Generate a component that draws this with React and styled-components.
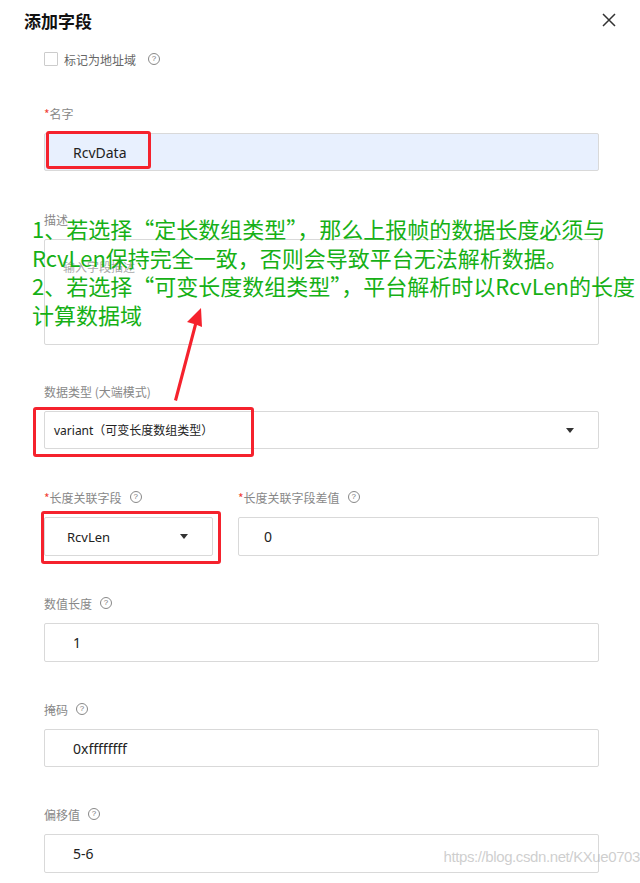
import React from "react"
import styled, { createGlobalStyle } from "styled-components"

const Global = createGlobalStyle`
  body {
    margin: 0;
    background: #fff;
    font-family: "Noto Sans", "Noto Sans CJK SC", sans-serif;
  }
`

const Page = styled.div`
  position: relative;
  width: 640px;
  height: 883px;
  overflow: hidden;
  background: #fff;
`

const Header = styled.div`
  display: flex;
  align-items: center;
  justify-content: space-between;
  height: 40px;
  padding: 0 23px 0 24px;
`

const Title = styled.h1`
  margin: 0;
  font-family: "Noto Sans CJK SC", sans-serif;
  font-size: 17px;
  font-weight: 700;
  color: #111;
`

const Form = styled.div`
  display: flex;
  flex-direction: column;
  padding: 12px 41px 0 44px;
`

const CheckRow = styled.div`
  display: flex;
  align-items: center;
  height: 14px;
  gap: 6px;
  margin-bottom: 39px;
  font-family: "Noto Sans CJK SC", sans-serif;
  font-size: 12px;
  color: #666;
`

const Check = styled.span`
  width: 14px;
  height: 14px;
  box-sizing: border-box;
  border: 1px solid #ccc;
  border-radius: 1px;
`

const Help = styled.span`
  display: inline-flex;
  align-items: center;
  justify-content: center;
  width: 12px;
  height: 12px;
  box-sizing: border-box;
  margin-left: ${(p) => p.$gap || 8}px;
  border: 1px solid #888;
  border-radius: 50%;
  font-family: "Liberation Sans", sans-serif;
  font-size: 8px;
  line-height: 1;
  color: #777;
`

const Field = styled.div`
  display: flex;
  flex-direction: column;
  flex: ${(p) => (p.$flex ? p.$flex : "none")};
  width: ${(p) => (p.$width ? p.$width + "px" : "auto")};
  margin-bottom: ${(p) => (p.$mb !== undefined ? p.$mb : 39)}px;
`

const Row = styled.div`
  display: flex;
  gap: 25px;
  margin-bottom: 39px;
`

const Label = styled.div`
  display: flex;
  align-items: center;
  height: 16px;
  margin-bottom: 12px;
  font-family: "Noto Sans CJK SC", sans-serif;
  font-size: 12px;
  color: #888;

  b {
    color: #f04134;
    font-weight: 400;
  }
`

const Box = styled.div`
  position: relative;
  display: flex;
  align-items: ${(p) => (p.$area ? "flex-start" : "center")};
  box-sizing: border-box;
  height: ${(p) => p.$h || 38}px;
  padding: ${(p) => (p.$area ? "18px" : "0")} 24px 0 ${(p) => p.$pl || 28}px;
  background: ${(p) => (p.$fill ? "#e8f0fe" : "#fff")};
  border: 1px solid #d9d9d9;
  border-radius: 2px;
  font-family: "Noto Sans", "Noto Sans CJK SC", sans-serif;
  font-size: ${(p) => p.$fs || 14}px;
  color: ${(p) => (p.$placeholder ? "#aaa" : "#222")};
`

const Value = styled.span`
  flex: 1;
  white-space: nowrap;
`

const Caret = styled.span`
  width: 0;
  height: 0;
  border-left: 4.5px solid transparent;
  border-right: 4.5px solid transparent;
  border-top: 5px solid #333;
`

const RedBox = styled.div`
  position: absolute;
  left: ${(p) => p.$l}px;
  top: ${(p) => p.$t}px;
  width: ${(p) => p.$w}px;
  height: ${(p) => p.$h}px;
  box-sizing: border-box;
  border: 3px solid #f5222d;
  border-radius: 3px;
`

const Note = styled.div`
  position: absolute;
  left: 32px;
  top: 214px;
  width: 610px;
  font-family: "Noto Sans CJK SC", sans-serif;
  font-size: 22px;
  line-height: 28.5px;
  color: #16b016;
  white-space: nowrap;
`

const Arrow = styled.svg`
  position: absolute;
  left: 160px;
  top: 300px;
`

const Watermark = styled.div`
  position: absolute;
  right: 0;
  top: 848px;
  font-family: "Liberation Sans", sans-serif;
  font-size: 15px;
  letter-spacing: -0.4px;
  color: rgba(190, 190, 190, 0.75);
`

const Close = () => (
  <svg width="16" height="16" viewBox="0 0 16 16">
    <path d="M2 2 L14 14 M14 2 L2 14" stroke="#333" strokeWidth="1.5" />
  </svg>
)

const App = () => (
  <Page>
    <Global />
    <Header>
      <Title>添加字段</Title>
      <Close />
    </Header>
    <Form>
      <CheckRow>
        <Check />
        标记为地址域
        <Help $gap={6}>?</Help>
      </CheckRow>

      <Field $mb={40}>
        <Label>
          <b>*</b>名字
        </Label>
        <Box $fill>
          <Value>RcvData</Value>
          <RedBox $l={1} $t={-3} $w={105} $h={38} />
        </Box>
      </Field>

      <Field $mb={38}>
        <Label>描述</Label>
        <Box $area $h={106} $pl={18} $fs={12} $placeholder>
          <Value>输入字段描述</Value>
        </Box>
      </Field>

      <Field $mb={40}>
        <Label>数据类型 (大端模式)</Label>
        <Box $pl={9} $fs={12}>
          <Value>variant（可变长度数组类型）</Value>
          <Caret />
          <RedBox $l={-12} $t={-5} $w={221} $h={50} />
        </Box>
      </Field>

      <Row>
        <Field $width={169} $mb={0}>
          <Label>
            <b>*</b>长度关联字段
            <Help>?</Help>
          </Label>
          <Box $pl={22} $h={39} $fs={13}>
            <Value>RcvLen</Value>
            <Caret />
            <RedBox $l={-4} $t={-7} $w={180} $h={53} />
          </Box>
        </Field>
        <Field $flex={1} $mb={0}>
          <Label>
            <b>*</b>长度关联字段差值
            <Help>?</Help>
          </Label>
          <Box $pl={25} $h={39}>
            <Value>0</Value>
          </Box>
        </Field>
      </Row>

      <Field>
        <Label>
          数值长度
          <Help>?</Help>
        </Label>
        <Box $h={39}>
          <Value>1</Value>
        </Box>
      </Field>

      <Field>
        <Label>
          掩码
          <Help>?</Help>
        </Label>
        <Box>
          <Value>0xffffffff</Value>
        </Box>
      </Field>

      <Field $mb={0}>
        <Label>
          偏移值
          <Help>?</Help>
        </Label>
        <Box $h={39}>
          <Value>5-6</Value>
        </Box>
      </Field>
    </Form>

    <Note>
      1、若选择“定长数组类型”，那么上报帧的数据长度必须与
      <br />
      RcvLen保持完全一致，否则会导致平台无法解析数据。
      <br />
      2、若选择“可变长度数组类型”，平台解析时以RcvLen的长度
      <br />
      计算数据域
    </Note>

    <Arrow width="60" height="110" viewBox="0 0 60 110">
      <path d="M14 100 L34 24 L27 22 L41 8 L42 27 L37 25 L17 101 Z" fill="#f5222d" />
    </Arrow>

    <Watermark>https://blog.csdn.net/KXue0703</Watermark>
  </Page>
)

export default App
